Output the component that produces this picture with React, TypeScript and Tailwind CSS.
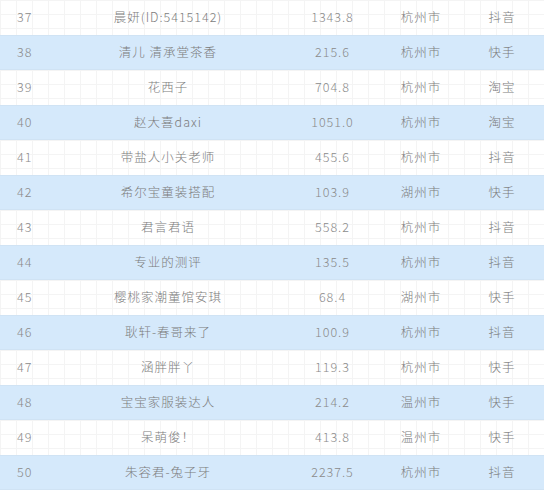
import React from 'react';

type Row = { no: number; name: string; value: string; city: string; platform: string };

const ROWS: Row[] = [
    { no: 37, name: '晨妍(ID:5415142)', value: '1343.8', city: '杭州市', platform: '抖音' },
    { no: 38, name: '清儿 清承堂茶香', value: '215.6', city: '杭州市', platform: '快手' },
    { no: 39, name: '花西子', value: '704.8', city: '杭州市', platform: '淘宝' },
    { no: 40, name: '赵大喜daxi', value: '1051.0', city: '杭州市', platform: '淘宝' },
    { no: 41, name: '带盐人小关老师', value: '455.6', city: '杭州市', platform: '抖音' },
    { no: 42, name: '希尔宝童装搭配', value: '103.9', city: '湖州市', platform: '快手' },
    { no: 43, name: '君言君语', value: '558.2', city: '杭州市', platform: '抖音' },
    { no: 44, name: '专业的测评', value: '135.5', city: '杭州市', platform: '抖音' },
    { no: 45, name: '樱桃家潮童馆安琪', value: '68.4', city: '湖州市', platform: '快手' },
    { no: 46, name: '耿轩-春哥来了', value: '100.9', city: '杭州市', platform: '抖音' },
    { no: 47, name: '涵胖胖丫', value: '119.3', city: '杭州市', platform: '快手' },
    { no: 48, name: '宝宝家服装达人', value: '214.2', city: '温州市', platform: '快手' },
    { no: 49, name: '呆萌俊！', value: '413.8', city: '温州市', platform: '快手' },
    { no: 50, name: '朱容君-兔子牙', value: '2237.5', city: '杭州市', platform: '抖音' },
];

export default function App() {
    return (
        <div
            className="w-[544px] h-[490px] overflow-hidden bg-white bg-[linear-gradient(to_right,#f4f4f4_1px,transparent_1px),linear-gradient(to_bottom,#f4f4f4_1px,transparent_1px)] bg-[size:16px_14px] text-[12.5px] font-light tracking-[1px] text-[#7c7c7c]"
            style={{ fontFamily: '"Noto Sans CJK SC", "Noto Sans", sans-serif' }}
        >
            {ROWS.map((r) => {
                const blue = r.no % 2 === 0;
                return (
                    <div
                        key={r.no}
                        className={
                            blue
                                ? 'grid grid-cols-[66px_204px_125px_52px_110px] h-[35px] items-center bg-[#d5e9fb] border-y border-[#d0e3f4]'
                                : 'grid grid-cols-[66px_204px_125px_52px_110px] h-[35px] items-center'
                        }
                    >
                        {/* rank */}
                        <div className="pl-[17px] text-[#8a8a8a]">{r.no}</div>
                        <div className="text-center whitespace-nowrap">{r.name}</div>
                        <div className="text-center text-[#8a8a8a]">{r.value}</div>
                        <div className="text-center whitespace-nowrap">{r.city}</div>
                        <div className="text-center">{r.platform}</div>
                    </div>
                );
            })}
        </div>
    );
}
